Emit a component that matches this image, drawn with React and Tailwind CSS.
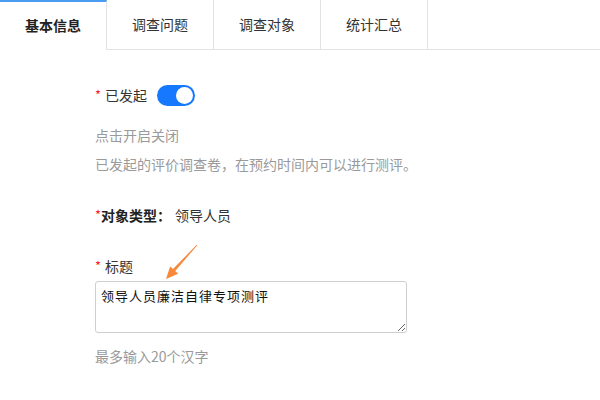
import React from "react";

const font = { fontFamily: '"Noto Sans CJK SC", "Microsoft YaHei", sans-serif' };

function Tab({ label, active }) {
  return (
    <div
      className={
        "w-[107px] h-[50px] flex items-center justify-center text-[14px] border-r border-[#e3e3e3] " +
        (active
          ? "font-bold text-[#222] border-t-2 border-t-[#4a9cf0] w-[106px] pb-[2px]"
          : "text-[#333] border-b border-b-[#e3e3e3]")
      }
    >
      {label}
    </div>
  );
}

export default function App() {
  return (
    <div className="relative w-[600px] h-[400px] bg-white overflow-hidden" style={font}>
      <div className="flex">
        <Tab label="基本信息" active />
        <Tab label="调查问题" />
        <Tab label="调查对象" />
        <Tab label="统计汇总" />
        <div className="flex-1 h-[50px] border-b border-[#e3e3e3]" />
      </div>

      <div className="pl-[95px] flex flex-col text-[14px]">
        <div className="mt-[35px] h-[20px] flex items-center">
          <span className="text-[#f5222d] mr-[4px] text-[13px]">*</span>
          <span className="text-[#333]">已发起</span>
          <div className="ml-[10px] w-[38px] h-[21px] rounded-full bg-[#1677ff] flex items-center justify-end pr-[2px]">
            <div className="w-[17px] h-[17px] rounded-full bg-white" />
          </div>
        </div>

        <div className="mt-[20px] leading-[20px] text-[#9a9a9a]">点击开启关闭</div>
        <div className="mt-[9px] leading-[20px] text-[#9a9a9a]">
          已发起的评价调查卷，在预约时间内可以进行测评。
        </div>

        <div className="mt-[31px] leading-[20px] flex items-center">
          <span className="text-[#f5222d] text-[13px]">*</span>
          <span className="font-bold text-[#222]">对象类型：</span>
          <span className="ml-[4px] text-[#333]">领导人员</span>
        </div>

        <div className="mt-[31px] leading-[20px] flex items-center">
          <span className="text-[#f5222d] mr-[4px] text-[13px]">*</span>
          <span className="text-[#333]">标题</span>
        </div>

        <textarea
          className="mt-[5px] w-[312px] h-[52px] border border-[#cfcfcf] rounded-[3px] pl-[5px] pt-[4px] text-[13px] leading-[20px] tracking-[1px] text-[#111] outline-none"
          style={font}
          defaultValue="领导人员廉洁自律专项测评"
        />

        <div className="mt-[13px] leading-[20px] text-[#9a9a9a]">最多输入20个汉字</div>
      </div>

      <svg className="absolute left-0 top-0 pointer-events-none" width="600" height="400">
        <polygon
          points="197.3,245.2 175.2,271.1 178.2,273.8 166,279 170.1,266.4 173.0,269.1 196.7,244.8"
          fill="#f7893b"
        />
      </svg>
    </div>
  );
}
